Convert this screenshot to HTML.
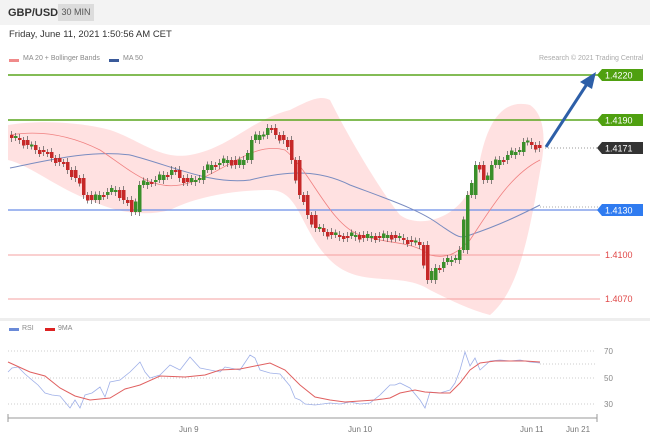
<!DOCTYPE html>
<html><head><meta charset="utf-8"><style>
body{margin:0;width:650px;height:440px;background:#eeeeee;font-family:"Liberation Sans",sans-serif;overflow:hidden;position:relative}
.hdr{position:absolute;left:0;top:0;width:650px;height:25px;background:#f3f3f3}
.t{position:absolute;white-space:nowrap}
</style></head><body>
<div class="hdr"></div>
<div class="t" style="left:8px;top:7px;font-size:11px;font-weight:bold;color:#333">GBP/USD</div>
<div class="t" style="left:58px;top:4px;width:36px;height:17px;background:#dcdcdc;font-size:9px;color:#555;text-align:center;line-height:17px">30 MIN</div>
<div style="position:absolute;left:0;top:25px;width:650px;height:293px;background:#fff"></div>
<div style="position:absolute;left:0;top:321px;width:650px;height:119px;background:#fff"></div>
<div class="t" style="left:9px;top:29px;font-size:9.5px;color:#333">Friday, June 11, 2021 1:50:56 AM CET</div>
<div style="position:absolute;left:9px;top:59px;width:10px;height:3px;background:#f08a8a"></div>
<div class="t" style="left:23px;top:55px;font-size:7px;color:#888">MA 20 + Bollinger Bands</div>
<div style="position:absolute;left:109px;top:59px;width:10px;height:3px;background:#3a5a9a"></div>
<div class="t" style="left:123px;top:55px;font-size:7px;color:#888">MA 50</div>
<div class="t" style="left:539px;top:55px;font-size:7px;color:#aaa">Research © 2021 Trading Central</div>
<div style="position:absolute;left:9px;top:328px;width:10px;height:3px;background:#6a8ad8"></div>
<div class="t" style="left:22px;top:325px;font-size:7px;color:#888">RSI</div>
<div style="position:absolute;left:45px;top:328px;width:10px;height:3px;background:#dd2222"></div>
<div class="t" style="left:58px;top:325px;font-size:7px;color:#888">9MA</div>
<svg id="s" width="650" height="440" style="position:absolute;left:0;top:0" font-family="Liberation Sans, sans-serif"></svg>
<script>
var s='';
// bollinger
s+='<path d="M8,125 C40,120 80,122 110,130 C140,140 160,160 190,155 C230,148 250,120 290,110 C310,100 320,95 330,100 C350,140 380,190 400,215 C420,230 470,220 480,160 C490,110 510,100 530,105 C545,115 545,140 542,160 C530,230 520,290 490,315 C470,310 450,300 430,290 C400,270 360,290 330,260 C300,230 300,190 270,190 C240,190 200,195 170,210 C140,218 110,210 90,200 C60,190 30,165 8,160 Z" fill="#ffdede" opacity="0.9"/>';
// hlines
s+='<line x1="8" y1="75" x2="600" y2="75" stroke="#5aa51e" stroke-width="1.5"/>';
s+='<line x1="8" y1="120" x2="600" y2="120" stroke="#5aa51e" stroke-width="1.5"/>';
s+='<line x1="8" y1="210" x2="600" y2="210" stroke="#6a8ee8" stroke-width="1.2"/>';
s+='<line x1="8" y1="255" x2="600" y2="255" stroke="#f4a0a0" stroke-width="1"/>';
s+='<line x1="8" y1="299" x2="600" y2="299" stroke="#f4a0a0" stroke-width="1"/>';
s+='<line x1="545" y1="148" x2="600" y2="148" stroke="#999" stroke-dasharray="1,2"/>';
s+='<line x1="540" y1="207" x2="600" y2="207" stroke="#aaa" stroke-dasharray="1,2"/>';
// MA lines
s+='<path d="M10,168 C50,160 90,150 130,155 C170,165 210,185 250,180 C290,170 320,170 350,185 C390,200 420,210 440,225 C455,235 460,240 470,235 C500,225 520,215 540,205" fill="none" stroke="#7a8cc0" stroke-width="1"/>';
s+='<path d="M10,135 C40,130 70,135 100,150 C130,170 150,190 180,185 C220,178 250,140 285,150 C310,170 330,225 360,235 C390,245 410,240 430,255 C450,260 460,250 470,240 C490,210 510,175 540,160" fill="none" stroke="#f08080" stroke-width="0.8"/>';
var c=[138,140,145,150,152,158,162,170,178,195,200,195,192,190,200,212,185,182,180,175,170,178,182,180,170,165,163,160,165,160,140,135,128,135,140,160,195,215,228,232,235,236,236,235,238,236,238,235,238,240,242,245,280,268,262,260,250,195,165,180,165,160,155,152,142,145,148];
var p=135;
for(var i=0;i<c.length;i++){var x=10+i*8,o=p,cl=c[i];var up=cl<o;var col=up?'#3a8f2a':'#c62828';var t=Math.min(o,cl),b=Math.max(o,cl);if(b-t<2)b=t+2;
s+='<line x1="'+(x+1.5)+'" y1="'+(t-4)+'" x2="'+(x+1.5)+'" y2="'+(b+4)+'" stroke="#555" stroke-width="0.7"/>';
s+='<rect x="'+x+'" y="'+t+'" width="3.5" height="'+(b-t)+'" fill="'+col+'"/>';
if(i+1<c.length){var m=(cl+c[i+1])/2+((i%2)?3:-3);var x2=x+4;var t2=Math.min(cl,m),b2=Math.max(cl,m);if(b2-t2<2)b2=t2+2;s+='<line x1="'+(x2+1.5)+'" y1="'+(t2-3)+'" x2="'+(x2+1.5)+'" y2="'+(b2+3)+'" stroke="#555" stroke-width="0.7"/><rect x="'+x2+'" y="'+t2+'" width="3.5" height="'+(b2-t2)+'" fill="'+(m<cl?'#3a8f2a':'#c62828')+'"/>';}
p=cl;}
// arrow
s+='<line x1="546" y1="147" x2="587" y2="84" stroke="#2d5fa8" stroke-width="3"/><polygon points="596,72 580,82 592,89" fill="#2d5fa8"/>';
// labels
function lab(y,bg,txt,fg){s+='<polygon points="597,'+y+' 602,'+(y-6)+' 643,'+(y-6)+' 643,'+(y+6)+' 602,'+(y+6)+'" fill="'+bg+'"/><text x="605" y="'+(y+3.5)+'" font-size="9" fill="'+fg+'">'+txt+'</text>';}
lab(75,'#4fa010','1.4220','#fff');lab(120,'#4fa010','1.4190','#fff');lab(148,'#333','1.4171','#fff');lab(210,'#2f7bf0','1.4130','#fff');
s+='<text x="605" y="258" font-size="9" fill="#e04848">1.4100</text><text x="605" y="302" font-size="9" fill="#e04848">1.4070</text>';
// RSI panel
[351,378,404].forEach(function(y){s+='<line x1="8" y1="'+y+'" x2="595" y2="'+y+'" stroke="#ccc" stroke-dasharray="1,2"/>';});
s+='<line x1="540" y1="364" x2="595" y2="364" stroke="#ccc" stroke-dasharray="1,2"/>';
s+='<text x="604" y="354" font-size="8" fill="#888">70</text><text x="604" y="381" font-size="8" fill="#888">50</text><text x="604" y="407" font-size="8" fill="#888">30</text>';
s+='<polyline fill="none" stroke="#9fb0e8" stroke-width="0.8" points="8,372 12,368 18,367 25,374 32,380 38,385 45,393 52,395 60,396 70,408 75,400 80,408 85,395 92,393 100,387 105,397 110,382 120,380 130,372 140,362 145,372 150,378 160,375 170,365 180,370 190,357 200,368 210,370 220,372 225,367 230,368 240,370 250,355 255,358 260,370 270,373 280,374 290,386 295,398 300,400 305,404 315,405 330,403 340,404 350,402 360,404 370,403 380,395 390,385 395,385 400,383 410,388 420,400 425,408 430,392 440,393 450,390 455,383 460,370 465,352 470,366 475,358 480,370 490,361 500,360 510,361 520,360 530,362 540,363"/>';
s+='<polyline fill="none" stroke="#e06060" stroke-width="1" points="8,362 30,372 45,376 60,388 75,396 90,400 110,398 125,389 140,385 160,376 185,377 205,375 220,370 240,369 255,366 270,363 285,370 300,385 315,397 330,400 345,402 360,401 375,400 390,398 400,393 415,390 425,392 440,393 450,393 460,383 470,370 480,363 495,361 510,361 525,361 540,362"/>';
s+='<line x1="8" y1="418" x2="597" y2="418" stroke="#999"/><line x1="8" y1="414" x2="8" y2="422" stroke="#999"/><line x1="597" y1="414" x2="597" y2="422" stroke="#999"/>';
s+='<text x="179" y="432" font-size="8" fill="#777">Jun 9</text><text x="348" y="432" font-size="8" fill="#777">Jun 10</text><text x="520" y="432" font-size="8" fill="#777">Jun 11</text><text x="566" y="432" font-size="8" fill="#777">Jun 21</text>';
document.getElementById('s').innerHTML=s;
</script>
</body></html>
